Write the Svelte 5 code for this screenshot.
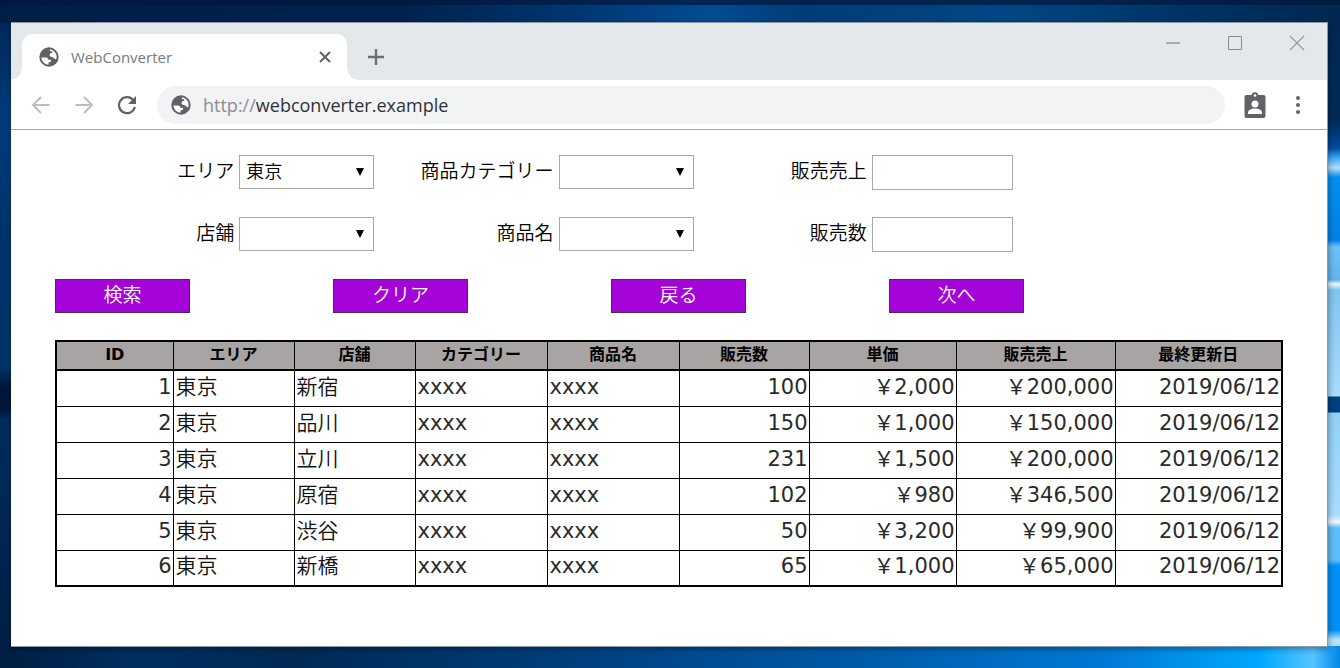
<script lang="ts">
	type Row = {
		id: number;
		area: string;
		shop: string;
		category: string;
		product: string;
		count: number;
		price: number;
		sales: number;
		updated: string;
	};

	const headers = ["ID", "エリア", "店舗", "カテゴリー", "商品名", "販売数", "単価", "販売売上", "最終更新日"];

	// relative column widths
	const columns = [117, 121, 121, 132, 132, 130, 147, 159, 167];
	const total = columns.reduce((a, b) => a + b, 0);

	const rows: Row[] = [
		{ id: 1, area: "東京", shop: "新宿", category: "xxxx", product: "xxxx", count: 100, price: 2000, sales: 200000, updated: "2019/06/12" },
		{ id: 2, area: "東京", shop: "品川", category: "xxxx", product: "xxxx", count: 150, price: 1000, sales: 150000, updated: "2019/06/12" },
		{ id: 3, area: "東京", shop: "立川", category: "xxxx", product: "xxxx", count: 231, price: 1500, sales: 200000, updated: "2019/06/12" },
		{ id: 4, area: "東京", shop: "原宿", category: "xxxx", product: "xxxx", count: 102, price: 980, sales: 346500, updated: "2019/06/12" },
		{ id: 5, area: "東京", shop: "渋谷", category: "xxxx", product: "xxxx", count: 50, price: 3200, sales: 99900, updated: "2019/06/12" },
		{ id: 6, area: "東京", shop: "新橋", category: "xxxx", product: "xxxx", count: 65, price: 1000, sales: 65000, updated: "2019/06/12" },
	];

	const fields = [
		{ id: "area", label: "エリア", options: ["東京"] },
		{ id: "category", label: "商品カテゴリー", options: [""] },
		{ id: "sales", label: "販売売上" },
		{ id: "shop", label: "店舗", options: [""] },
		{ id: "product", label: "商品名", options: [""] },
		{ id: "count", label: "販売数" },
	];

	const actions = ["検索", "クリア", "戻る", "次へ"];

	const yen = (n: number) => "￥" + n.toLocaleString("en-US");
</script>

{#snippet globe()}
	<svg class="globe" viewBox="0 0 20 20" aria-hidden="true">
		<circle cx="10" cy="10" r="8.7" fill="#fff" stroke="#5f6368" stroke-width="2" />
		<path
			fill="#5f6368"
			d="M10.5 1C5 1 1 5 1 10.2c2 .6 4.200.3 6 .3 1.600 0 2.500 1 2.300 2.300h2.200c.5 0 .8.6.6 1.200-.3 1-1.300 1.300-2.600 1.300v3.200c4.500.6 8.500-2.500 9.300-7-1.300 1-3.300.8-4-.5-.5-1-1.800-.8-2.800-1.200-1.300-.5-1.700-1.800-1-2.900.6-1 2-.8 2.400-1.600.4-.9-.6-1.200-1.500-1.100-1 .1-1.300-.6-1-1.500.3-.7.5-1.100-.4-1.700z"
		/>
	</svg>
{/snippet}

<div class="desktop">
	<div class="window">
		<div class="tabstrip">
			<div class="tab">
				{@render globe()}
				<span class="tab-title">WebConverter</span>
				<button class="icon" aria-label="タブを閉じる">
					<svg width="12" height="12" viewBox="0 0 12 12"><path d="M1 1l10 10M11 1L1 11" stroke="#5f6368" stroke-width="2" /></svg>
				</button>
			</div>
			<button class="icon new-tab" aria-label="新しいタブ">
				<svg width="16" height="16" viewBox="0 0 16 16"><path d="M8 0v16M0 8h16" stroke="#6b6e72" stroke-width="2.400" /></svg>
			</button>
			<div class="controls">
				<button class="icon" aria-label="最小化">
					<svg width="16" height="16" viewBox="0 0 16 16"><path d="M1 8h14" stroke="#999" stroke-width="1.500" /></svg>
				</button>
				<button class="icon" aria-label="最大化">
					<svg width="16" height="16" viewBox="0 0 16 16"><path d="M1.500 1.500h13v13h-13z" fill="none" stroke="#8a8a8a" /></svg>
				</button>
				<button class="icon" aria-label="閉じる">
					<svg width="16" height="16" viewBox="0 0 16 16"><path d="M1 1l14 14M15 1L1 15" stroke="#999" stroke-width="1.200" /></svg>
				</button>
			</div>
		</div>

		<div class="toolbar">
			<button class="icon" aria-label="戻る">
				<svg width="20" height="20" viewBox="0 0 20 20"><path d="M18.500 10H2.500M10 2L2 10l8 8" fill="none" stroke="#bbbdbf" stroke-width="2" /></svg>
			</button>
			<button class="icon" aria-label="進む">
				<svg width="20" height="20" viewBox="0 0 20 20"><path d="M1.500 10h16M10 2l8 8-8 8" fill="none" stroke="#bbbdbf" stroke-width="2" /></svg>
			</button>
			<button class="icon" aria-label="再読み込み">
				<svg width="20" height="20" viewBox="0 0 20 20">
					<path d="M16.500 5.500A8 8 0 1 0 17.800 12" fill="none" stroke="#5f6368" stroke-width="2.200" />
					<path d="M19 1v8h-8z" fill="#5f6368" />
				</svg>
			</button>
			<div class="address">
				{@render globe()}
				<div class="url" role="textbox" aria-label="アドレス" tabindex="0" contenteditable="true"><span>http://</span>webconverter.example</div>
			</div>
			<button class="icon profile" aria-label="プロフィール">
				<svg width="22" height="26" viewBox="0 0 22 26">
					<rect x="0.500" y="3" width="21" height="23" rx="2" fill="#5f6368" />
					<circle cx="11" cy="3.500" r="3.300" fill="#5f6368" />
					<circle cx="11" cy="3.500" r="1.300" fill="#fff" />
					<circle cx="11" cy="12" r="3.500" fill="#fff" />
					<path d="M4 22v-1.500c0-2.700 4-4 7-4s7 1.300 7 4V22z" fill="#fff" />
				</svg>
			</button>
			<button class="icon" aria-label="メニュー">
				<svg width="4" height="18" viewBox="0 0 4 18" fill="#5f6368"><circle cx="2" cy="2" r="2" /><circle cx="2" cy="9" r="2" /><circle cx="2" cy="16" r="2" /></svg>
			</button>
		</div>

		<main>
			<form onsubmit={(e) => e.preventDefault()}>
				<div class="fields">
					{#each fields as field (field.id)}
						<div class="field">
							<label for={field.id}>{field.label}</label>
							{#if field.options}
								<div class="select">
									<select id={field.id}>
										{#each field.options as option}
											<option>{option}</option>
										{/each}
									</select>
									<svg width="8" height="8" viewBox="0 0 8 8"><path d="M0 0h8L4 8z" /></svg>
								</div>
							{:else}
								<input id={field.id} type="text" />
							{/if}
						</div>
					{/each}
				</div>
				<div class="actions">
					{#each actions as action}
						<button class="action" type="button">{action}</button>
					{/each}
				</div>
			</form>

			<table>
				<colgroup>
					{#each columns as width}
						<col style="width: {(width / total) * 100}%" />
					{/each}
				</colgroup>
				<thead>
					<tr>
						{#each headers as header}
							<th scope="col">{header}</th>
						{/each}
					</tr>
				</thead>
				<tbody>
					{#each rows as row (row.id)}
						<tr>
							<td class="num">{row.id}</td>
							<td>{row.area}</td>
							<td>{row.shop}</td>
							<td class="latin">{row.category}</td>
							<td class="latin">{row.product}</td>
							<td class="num">{row.count}</td>
							<td class="num">{yen(row.price)}</td>
							<td class="num">{yen(row.sales)}</td>
							<td class="num">{row.updated}</td>
						</tr>
					{/each}
				</tbody>
			</table>
		</main>
	</div>
</div>

<style>
	:global(body) {
		margin: 0;
	}

	.desktop {
		box-sizing: border-box;
		min-height: 100vh;
		display: flex;
		padding: 22px 12px 21px 11px;
		font-family: "DejaVu Sans", "Noto Sans CJK JP", sans-serif;
		font-weight: 350;
		/* wallpaper: top edge, bottom edge, left edge, window light on the right */
		background:
			linear-gradient(rgba(0, 22, 60, 0.7), rgba(0, 22, 60, 0.7)) top / 100% 5px no-repeat,
			linear-gradient(90deg, #001f48, #00224c 30%, #003a78 45%, #004c92 53%, #003c78 60%, #004684 75%, #003466 88%, #002850) top / 100% 23px no-repeat,
			linear-gradient(90deg, #001e42, #002f60 10%, #002a54 22%, #003c78 40%, #0058a4 62%, #0078d4 82%, #00a8ff 94%, #55c4ff 98%, #0088e8) bottom / 100% 22px no-repeat,
			linear-gradient(#002450, #003c7c 18%, #00346c 34%, #003468 55%, #001638 58%, #001638 61%, #002c5c 63%, #001e44) left / 50% 100% no-repeat,
			linear-gradient(
				#002850 0,
				#002a58 120px,
				#004c9c 148px,
				#3ba8f4 158px,
				#b8dcf4 168px,
				#0090f0 177px,
				#0080e8 240px,
				#70c0f4 247px,
				#60b4ec 280px,
				#f0f8ff 284px,
				#80c4f0 290px,
				#a8dcff 396px,
				#00407c 397px,
				#00407c 412px,
				#90d0f8 413px,
				#a8dcff 515px,
				#f0f8ff 522px,
				#60bcf4 528px,
				#60bcf8 560px,
				#0090f8 566px,
				#0090f8 630px,
				#c0e4fc 640px,
				#70c4f8
			) right / 50% 100% no-repeat;
	}

	.window {
		flex: 1;
		min-width: 0;
		display: flex;
		flex-direction: column;
		background: #fff;
		border: 1px solid #8c9aa6;
		border-left: 0;
		box-shadow: 1px 2px 6px rgba(0, 0, 0, 0.35);
	}

	.icon {
		display: flex;
		align-items: center;
		justify-content: center;
		padding: 0;
		border: 0;
		background: none;
	}

	.globe {
		flex: none;
		width: 20px;
		height: 20px;
	}

	.tabstrip {
		display: flex;
		align-items: flex-end;
		height: 57px;
		padding-left: 11px;
		background: #e5e8eb;
	}

	.tab {
		position: relative;
		box-sizing: border-box;
		display: flex;
		align-items: center;
		width: 325px;
		height: 46px;
		padding: 0 16px 0 17px;
		background: #fff;
		border-radius: 11px 11px 0 0;
	}

	.tab::before,
	.tab::after {
		content: "";
		position: absolute;
		bottom: 0;
		width: 11px;
		height: 11px;
	}

	.tab::before {
		right: 100%;
		background: radial-gradient(circle at 0 0, transparent 10px, #fff 11px);
	}

	.tab::after {
		left: 100%;
		background: radial-gradient(circle at 100% 0, transparent 10px, #fff 11px);
	}

	.tab-title {
		flex: 1;
		margin-left: 12px;
		font: 15px "Open Sans", "Noto Sans", sans-serif;
		color: #777a7e;
	}

	.new-tab {
		width: 58px;
		height: 46px;
	}

	.controls {
		display: flex;
		gap: 46px;
		align-self: flex-start;
		margin: 12px 22px 0 auto;
	}

	.toolbar {
		display: flex;
		align-items: center;
		gap: 23px;
		height: 49px;
		padding: 0 27px 0 20px;
		border-bottom: 1px solid #a4a6a9;
	}

	.address {
		flex: 1;
		display: flex;
		align-items: center;
		gap: 12px;
		height: 38px;
		margin-left: -3px;
		padding-left: 14px;
		border-radius: 19px;
		background: #f1f3f4;
	}

	.url {
		font: 18px "Open Sans", "Noto Sans", sans-serif;
		color: #303236;
		outline: none;
	}

	.url span {
		color: #8a8d91;
	}

	.profile {
		margin-left: -4px;
		margin-right: 7px;
	}

	main {
		padding: 25px 44px 24px;
	}

	.fields {
		display: grid;
		grid-template-columns: repeat(3, 26%);
		row-gap: 27px;
	}

	.field {
		display: flex;
		justify-content: flex-end;
		gap: 5px;
		height: 35px;
		font-size: 19px;
		line-height: 32px;
		white-space: nowrap;
	}

	.select {
		position: relative;
	}

	.select svg {
		position: absolute;
		top: 13px;
		right: 10px;
		pointer-events: none;
	}

	select,
	input {
		box-sizing: border-box;
		width: 135px;
		height: 34px;
		margin: 0;
		padding: 0 7px 4px 6px;
		border: 1px solid #a9a9a9;
		border-radius: 0;
		background: #fff;
		color: #000;
		font: inherit;
		font-size: 18px;
	}

	select {
		display: block;
		appearance: none;
	}

	input {
		width: 141px;
		height: 35px;
	}

	.actions {
		display: grid;
		grid-template-columns: repeat(4, 12fr) 5fr;
		margin-top: 27px;
	}

	.action {
		box-sizing: border-box;
		width: 135px;
		height: 34px;
		padding: 0 0 3px;
		border: 1px solid #4b2a5c;
		background: #a404d8;
		color: #fff;
		font: inherit;
		font-size: 19px;
		line-height: 28px;
	}

	table {
		width: 100%;
		margin-top: 27px;
		table-layout: fixed;
		border-collapse: collapse;
		border: 2px solid #000;
	}

	th,
	td {
		box-sizing: border-box;
		padding: 0 2px;
		border: 1px solid #000;
	}

	th {
		height: 29px;
		padding-bottom: 2px;
		border-bottom-width: 2px;
		background: #a8a4a3;
		font-size: 16px;
		font-weight: 700;
		line-height: 24px;
	}

	td {
		height: 36px;
		padding-bottom: 3px;
		color: #111;
		font-size: 21px;
		line-height: 30px;
		white-space: nowrap;
	}

	.num,
	.latin {
		color: #2a2a2a;
		font-weight: 400;
	}

	.num {
		padding-right: 1px;
		text-align: right;
	}
</style>
